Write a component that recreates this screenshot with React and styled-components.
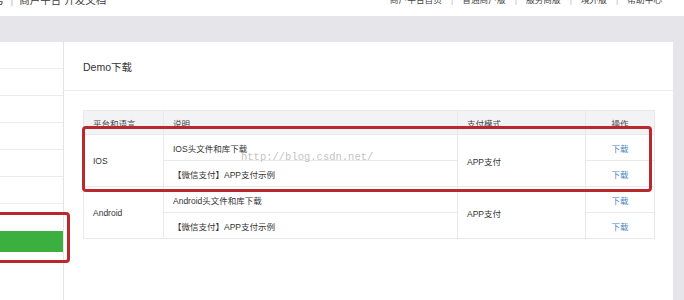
import React from 'react';
import styled, { createGlobalStyle } from 'styled-components';

const GlobalStyle = createGlobalStyle`
  html, body {
    margin: 0;
    padding: 0;
    background: #ffffff;
  }
  body {
    width: 684px;
    height: 300px;
    overflow: hidden;
    font-family: "Liberation Sans", "Noto Sans CJK SC", sans-serif;
    color: #333;
  }
`;

const Page = styled.div`
  width: 684px;
  height: 300px;
  display: flex;
  flex-direction: column;
  overflow: hidden;
`;

const TopBar = styled.div`
  height: 16px;
  flex: none;
  background: #fff;
  display: flex;
  justify-content: space-between;
  align-items: flex-start;
  overflow: hidden;
`;

const Brand = styled.div`
  margin-top: -7px;
  margin-left: -6px;
  font-size: 10.5px;
  line-height: 14px;
  color: #3a3a3a;
  white-space: nowrap;
  display: flex;
  gap: 6px;
`;

const Nav = styled.div`
  margin-top: -7px;
  margin-right: 22px;
  display: flex;
  align-items: center;
  gap: 9px;
  font-size: 8.7px;
  line-height: 14px;
  color: #444;
  white-space: nowrap;
`;

const Sep = styled.span`
  color: #bbb;
`;

const Main = styled.div`
  flex: 1;
  background: #e6e6ea;
  padding-top: 26px;
  display: flex;
  min-height: 0;
`;

const Sidebar = styled.div`
  position: relative;
  z-index: 2;
  width: 63px;
  flex: none;
  background: #fff;
  border-right: 1px solid #e4e4e4;
`;

const SideItem = styled.div`
  height: 26px;
  border-bottom: 1px solid #ececec;
`;

const SideActive = styled.div`
  margin-top: 27px;
  height: 21px;
  background: #3bb03e;
`;

const Mark = styled.div`
  position: absolute;
  z-index: 3;
  left: ${p => p.$left}px;
  top: ${p => p.$top}px;
  width: ${p => p.$w}px;
  height: ${p => p.$h}px;
  border: 3px solid #b8282c;
  border-radius: 4px;
  box-sizing: border-box;
  pointer-events: none;
`;

const Card = styled.div`
  position: relative;
  z-index: 1;
  flex: 1;
  margin-right: 12px;
  background: #fff;
`;

const CardHeader = styled.div`
  height: 48px;
  padding-left: 19px;
  display: flex;
  align-items: center;
  border-bottom: 1px solid #eeeeee;
  font-size: 10.5px;
  color: #333;
`;

const CardBody = styled.div`
  padding: 19px 18px 0 19px;
`;

const TableWrap = styled.div`
  position: relative;
`;

const Table = styled.table`
  width: 571px;
  border-collapse: collapse;
  table-layout: fixed;
  font-size: 8.5px;
  color: #333;

  th, td {
    border: 1px solid #e9e9ec;
    padding: 0 9px;
    text-align: left;
    font-weight: normal;
    white-space: nowrap;
  }
  th {
    height: 23px;
    background: #f3f3f6;
    color: #444;
  }
  td {
    height: 25px;
  }
`;

const Cell = styled.td`
  text-align: ${p => (p.$center ? 'center' : 'left')} !important;
`;

const HeadCell = styled.th`
  text-align: ${p => (p.$center ? 'center' : 'left')} !important;
`;

const Link = styled.a`
  color: #4a86c4;
  text-decoration: none;
`;

const Watermark = styled.div`
  position: absolute;
  left: 177px;
  top: 109px;
  font-family: "Liberation Mono", monospace;
  font-size: 10.5px;
  color: rgba(140, 140, 140, 0.55);
  pointer-events: none;
`;

const rows = [
  { platform: 'IOS', items: ['IOS头文件和库下载', '【微信支付】APP支付示例'] },
  { platform: 'Android', items: ['Android头文件和库下载', '【微信支付】APP支付示例'] },
];

export default function App() {
  return (
    <Page>
      <GlobalStyle />
      <TopBar>
        <Brand>
          <span>号</span>
          <Sep>|</Sep>
          <span>商户平台&nbsp;开发文档</span>
        </Brand>
        <Nav>
          <span>商户平台首页</span>
          <Sep>|</Sep>
          <span>普通商户版</span>
          <Sep>|</Sep>
          <span>服务商版</span>
          <Sep>|</Sep>
          <span>境外版</span>
          <Sep>|</Sep>
          <span>帮助中心</span>
        </Nav>
      </TopBar>
      <Main>
        <Sidebar>
          {[0, 1, 2, 3, 4, 5].map(i => (
            <SideItem key={i} />
          ))}
          <SideActive />
          <Mark $left={-10} $top={170} $w={80} $h={51} />
        </Sidebar>
        <Card>
          <CardHeader>Demo下载</CardHeader>
          <CardBody>
            <TableWrap>
              <Table>
                <colgroup>
                  <col style={{ width: 80 }} />
                  <col style={{ width: 294 }} />
                  <col style={{ width: 128 }} />
                  <col style={{ width: 69 }} />
                </colgroup>
                <thead>
                  <tr>
                    <HeadCell>平台和语言</HeadCell>
                    <HeadCell>说明</HeadCell>
                    <HeadCell>支付模式</HeadCell>
                    <HeadCell $center>操作</HeadCell>
                  </tr>
                </thead>
                <tbody>
                  {rows.map(r =>
                    r.items.map((item, i) => (
                      <tr key={r.platform + i}>
                        {i === 0 && <Cell rowSpan={2}>{r.platform}</Cell>}
                        <Cell>{item}</Cell>
                        {i === 0 && <Cell rowSpan={2}>APP支付</Cell>}
                        <Cell $center>
                          <Link href="#">下载</Link>
                        </Cell>
                      </tr>
                    ))
                  )}
                </tbody>
              </Table>
              <Mark $left={-1} $top={16} $w={570} $h={66} />
            </TableWrap>
          </CardBody>
          <Watermark>http://blog.csdn.net/</Watermark>
        </Card>
      </Main>
    </Page>
  );
}
